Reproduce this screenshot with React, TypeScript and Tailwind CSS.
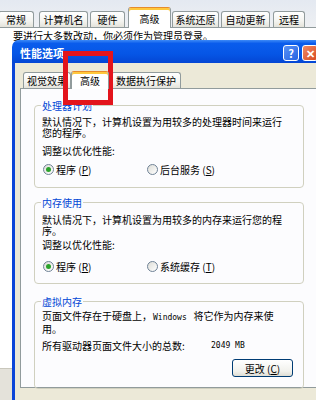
import React from "react";

const parentTabs = [
  { label: "常规", cls: "ml-[-2px] w-[36px]" },
  { label: "计算机名", cls: "ml-[5px] w-[49px]" },
  { label: "硬件", cls: "ml-[2px] w-[35px]" },
  { label: "高级", cls: "ml-[3px] w-[43px]", active: true },
  { label: "系统还原", cls: "ml-[1px] w-[47px]" },
  { label: "自动更新", cls: "ml-[2px] w-[49px]" },
  { label: "远程", cls: "ml-[3px] w-[32px]" },
];

const dialogTabs = [
  { label: "视觉效果", cls: "w-[48px]" },
  { label: "高级", cls: "w-[38px]", active: true },
  { label: "数据执行保护", cls: "ml-[2px] w-[70px]" },
];

function Tab({ label, cls, active, tall }: { label: string; cls: string; active?: boolean; tall: string }) {
  if (active) {
    return (
      <div
        className={`${cls} ${tall} relative z-10 -mb-px flex items-center justify-center rounded-t-[3px] border border-b-0 border-[#919B9C] border-t-[#E68B2C] bg-white shadow-[inset_0_2px_0_#FFC83C]`}
      >
        {label}
      </div>
    );
  }
  return (
    <div
      className={`${cls} h-[16px] flex items-center justify-center rounded-t-[3px] border border-b-0 border-[#919B9C] bg-[linear-gradient(#FFFFFF,#F4F4F0_60%,#E4E3DB)]`}
    >
      {label}
    </div>
  );
}

function Radio({ checked, label, k }: { checked?: boolean; label: string; k: string }) {
  return (
    <div className="flex items-center">
      <span className="flex h-[11px] w-[11px] items-center justify-center rounded-full border border-[#6F8296] bg-[linear-gradient(135deg,#DDDDD7,#FFFFFF)]">
        {checked && <span className="h-[5px] w-[5px] rounded-full bg-[#2BA32B]" />}
      </span>
      <span className="ml-[2px]">
        {label} (<u>{k}</u>)
      </span>
    </div>
  );
}

export default function App() {
  return (
    <div className="relative h-[400px] w-[316px] overflow-hidden bg-[#ECE9D8] font-['Noto_Sans_CJK_SC',sans-serif] text-[10px] leading-[11px] text-black">
      {/* parent window: 系统属性 */}
      <div className="flex h-[28px] items-end border-b border-[#919B9C] bg-[linear-gradient(#E4E9F1,#EEF0F3)]">
        {parentTabs.map((t) => (
          <Tab key={t.label} label={t.label} cls={t.cls} active={t.active} tall="h-[21px]" />
        ))}
      </div>
      <div className="h-[340px] bg-white pl-[13px] pt-[2px]">
        要进行大多数改动，你必须作为管理员登录。
      </div>
      <div className="h-[32px] border-t border-[#C9C7BC] bg-[#E4E2DA]" />

      {/* 性能选项 dialog */}
      <div className="absolute left-[12px] top-[40px] flex h-[370px] w-[322px] flex-col">
        <div className="flex h-[23px] items-center rounded-t-[7px] bg-[linear-gradient(#3D8AF7,#0A5CEC_15%,#0656E6_60%,#0446D4)] pl-[8px] pr-[16px] pt-[3px]">
          <span className="text-[11px] font-bold text-white">性能选项</span>
          <span className="ml-auto flex h-[16px] w-[16px] items-center justify-center rounded-[3px] border border-white bg-[linear-gradient(135deg,#5A92F5,#2563E3)] text-[11px] font-bold text-white">
            ?
          </span>
          <span className="ml-[3px] flex h-[16px] w-[16px] items-center justify-center rounded-[3px] border border-white bg-[linear-gradient(135deg,#F08A66,#D8491F)] text-[11px] font-bold text-white">
            ✕
          </span>
        </div>
        <div className="flex-1 border-x-[3px] border-[#0B45D8] bg-[#ECE9D8] px-[5px] pt-[7px]">
          <div className="flex h-[18px] items-end pl-[3px]">
            {dialogTabs.map((t) => (
              <Tab key={t.label} label={t.label} cls={t.cls} active={t.active} tall="h-[18px]" />
            ))}
          </div>
          <div className="h-[300px] border border-[#919B9C] bg-[#FCFCFE] pl-[13px] pt-[11px]">
            <fieldset className="w-[270px] rounded-[4px] border border-[#D0D0BF] px-[7px] pb-[12px]">
              <legend className="-ml-[1px] px-[1px] text-[#0046D5]">处理器计划</legend>
              <p className="mt-[5px]">
                默认情况下，计算机设置为用较多的处理器时间来运行
                <br />
                您的程序。
              </p>
              <p className="mt-[7px]">调整以优化性能:</p>
              <div className="mt-[7px] flex h-[12px] items-center pl-[1px]">
                <div className="w-[104px]">
                  <Radio checked label="程序" k="P" />
                </div>
                <Radio label="后台服务" k="S" />
              </div>
            </fieldset>

            <fieldset className="mt-[9px] w-[270px] rounded-[4px] border border-[#D0D0BF] px-[7px] pb-[11px]">
              <legend className="-ml-[1px] px-[1px] text-[#0046D5]">内存使用</legend>
              <p className="mt-[6px]">
                默认情况下，计算机设置为用较多的内存来运行您的程
                <br />
                序。
              </p>
              <p className="mt-[3px]">调整以优化性能:</p>
              <div className="mt-[10px] flex h-[12px] items-center pl-[1px]">
                <div className="w-[104px]">
                  <Radio checked label="程序" k="R" />
                </div>
                <Radio label="系统缓存" k="T" />
              </div>
            </fieldset>

            <fieldset className="mt-[12px] w-[270px] rounded-[4px] border border-[#D0D0BF] px-[7px] pb-[11px]">
              <legend className="-ml-[1px] px-[1px] text-[#0046D5]">虚拟内存</legend>
              <p className="mt-[3px]">
                页面文件存在于硬盘上，
                <span className="ml-[1px] mr-[2px] font-['DejaVu_Sans_Mono',monospace] text-[8px]">Windows </span>
                将它作为内存来使
                <br />
                用。
              </p>
              <div className="mt-[6px] flex">
                <span className="w-[169px]">所有驱动器页面文件大小的总数:</span>
                <span className="font-['DejaVu_Sans_Mono',monospace] text-[8px]">2049 MB</span>
              </div>
              <div className="mt-[8px] flex justify-end pr-[3px]">
                <button className="flex h-[18px] w-[61px] items-center justify-center rounded-[3px] border border-[#003C74] bg-[linear-gradient(#FFFFFF,#F1F1EC_70%,#DEDDD4)]">
                  更改 (<u>C</u>)
                </button>
              </div>
            </fieldset>
          </div>
        </div>
      </div>

      {/* red highlight annotation */}
      <div className="absolute left-[63px] top-[51px] h-[54px] w-[50px] border-[5px] border-[#E3141C]" />
    </div>
  );
}
